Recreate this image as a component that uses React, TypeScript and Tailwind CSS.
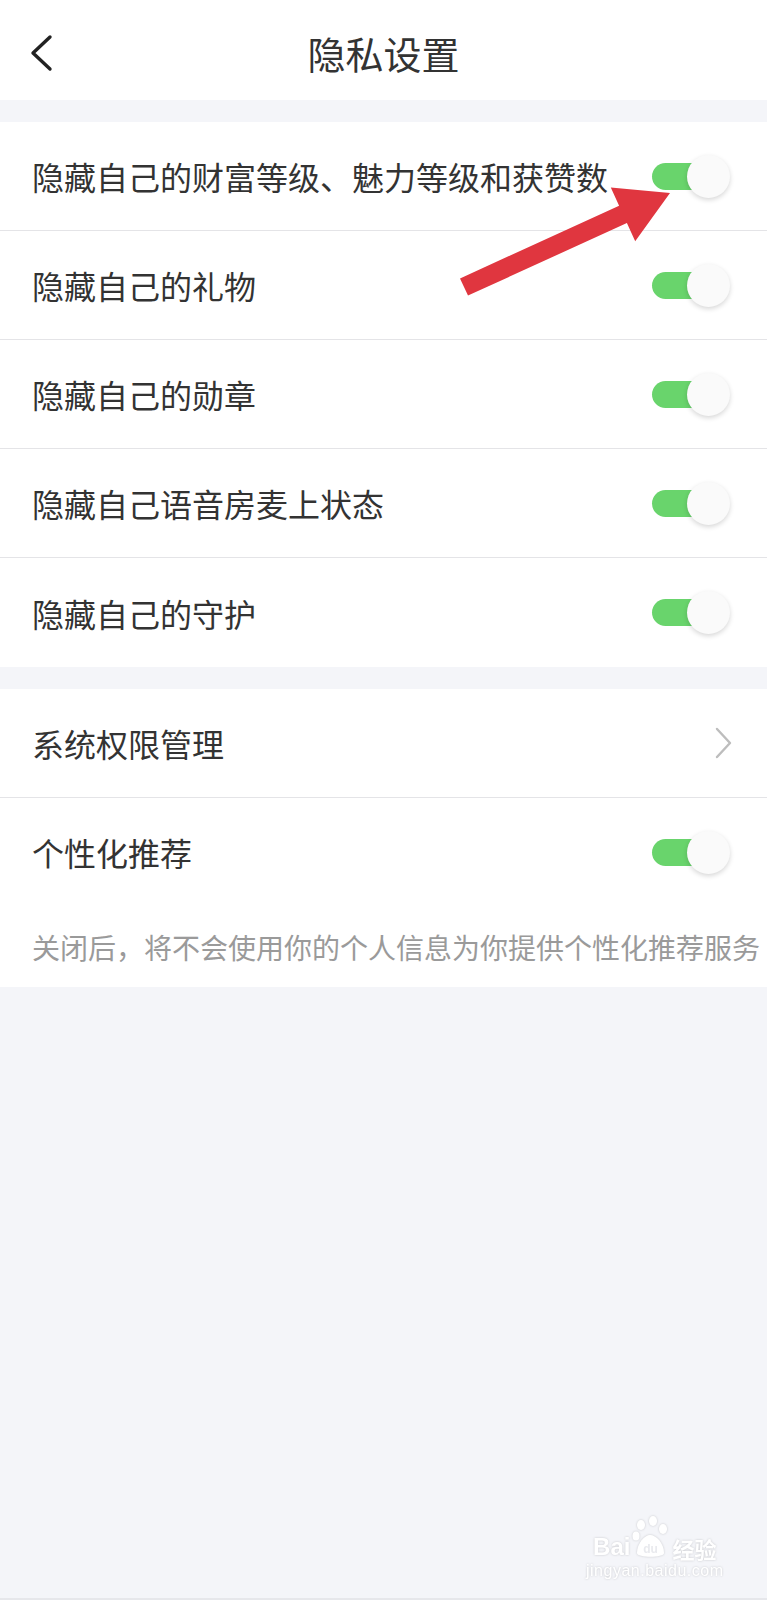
import React from "react";

const font = {
  fontFamily: '"Noto Sans CJK SC", "Noto Sans", sans-serif',
};

function Toggle() {
  return (
    <div className="relative w-[78px] h-[43px] shrink-0">
      <div className="absolute left-0 top-[8px] h-[27px] w-[64px] rounded-full bg-[#69d46c]" />
      <div className="absolute right-0 top-0 h-[43px] w-[43px] rounded-full bg-[#fafafa] shadow-[0_2px_5px_rgba(0,0,0,0.16)]" />
    </div>
  );
}

function Row({
  label,
  right,
  border = true,
}: {
  label: string;
  right: React.ReactNode;
  border?: boolean;
}) {
  return (
    <div
      className={
        "flex h-[109px] items-center justify-between pl-[32px] pr-[37px] " +
        (border ? "border-b border-[#e4e4e7]" : "")
      }
    >
      <span className="text-[32px] leading-none text-[#333333]">{label}</span>
      {right}
    </div>
  );
}

function ChevronRight() {
  return (
    <svg width="20" height="32" viewBox="0 0 20 32" className="mr-[-4px]">
      <path d="M3 2 L16 16 L3 30" fill="none" stroke="#bdbdbd" strokeWidth="2.4" strokeLinecap="round" strokeLinejoin="round" />
    </svg>
  );
}

export default function App() {
  return (
    <div className="relative w-[767px] min-h-[1600px] bg-[#f4f5f9] border-b-2 border-[#e6e7eb]" style={font}>
      {/* header */}
      <div className="grid h-[100px] grid-cols-[1fr_auto_1fr] items-center bg-white px-[30px] pt-[5px]">
        <div className="flex items-center">
          <svg width="24" height="38" viewBox="0 0 24 38">
            <path d="M20 3 L3 19 L20 35" fill="none" stroke="#222222" strokeWidth="3.4" strokeLinecap="round" strokeLinejoin="round" />
          </svg>
        </div>
        <h1 className="text-[38px] font-normal leading-none text-[#333333]">隐私设置</h1>
        <div />
      </div>

      <div className="h-[22px]" />

      <div className="bg-white">
        <Row label="隐藏自己的财富等级、魅力等级和获赞数" right={<Toggle />} />
        <Row label="隐藏自己的礼物" right={<Toggle />} />
        <Row label="隐藏自己的勋章" right={<Toggle />} />
        <Row label="隐藏自己语音房麦上状态" right={<Toggle />} />
        <Row label="隐藏自己的守护" right={<Toggle />} border={false} />
      </div>

      <div className="h-[22px]" />

      <div className="bg-white">
        <Row label="系统权限管理" right={<ChevronRight />} />
        <div className="flex h-[108px] items-center justify-between pl-[32px] pr-[37px]">
          <span className="text-[32px] leading-none text-[#333333]">个性化推荐</span>
          <Toggle />
        </div>
        <div className="flex h-[81px] items-center pl-[32px]">
          <span className="whitespace-nowrap text-[28px] leading-none text-[#9a9a9a]">
            关闭后，将不会使用你的个人信息为你提供个性化推荐服务
          </span>
        </div>
      </div>

      {/* red annotation arrow */}
      <svg
        className="pointer-events-none absolute left-0 top-0"
        width="767"
        height="400"
        viewBox="0 0 767 400"
      >
        <polygon
          points="460,278.4 619.1,205.8 610.8,187.6 670,193 635.2,241.2 626.9,223 468,295.6"
          fill="#e0363f"
        />
      </svg>

      {/* watermark */}
      <div
        className="pointer-events-none absolute left-[586px] top-[1515px] flex flex-col items-center text-white"
        style={{ fontFamily: '"Liberation Sans", Arial, sans-serif', filter: "drop-shadow(0 0 1px rgba(0,0,0,0.18))" }}
      >
        <div className="flex items-end">
          <span className="text-[24px] font-bold leading-none">Bai</span>
          <svg width="38" height="44" viewBox="0 0 38 44" className="mx-[1px]">
            <ellipse cx="10" cy="10" rx="4" ry="5" fill="white" />
            <ellipse cx="22" cy="6" rx="4" ry="5" fill="white" />
            <ellipse cx="32" cy="14" rx="4" ry="5" fill="white" />
            <ellipse cx="5" cy="21" rx="3.5" ry="4.5" fill="white" />
            <path d="M6 38 C6 28 14 20 19 20 C25 20 33 28 33 38 C33 43 6 43 6 38 Z" fill="white" />
            <text x="19.5" y="38" textAnchor="middle" fontSize="12" fontWeight="bold" fill="#e9eaee" fontFamily="Liberation Sans, Arial, sans-serif">du</text>
          </svg>
          <span className="ml-[2px] text-[22px] font-bold leading-none" style={{ fontFamily: '"Noto Sans CJK SC", sans-serif' }}>经验</span>
        </div>
        <span className="mt-[4px] text-[16px] leading-none tracking-[0.5px]">jingyan.baidu.com</span>
      </div>
    </div>
  );
}
